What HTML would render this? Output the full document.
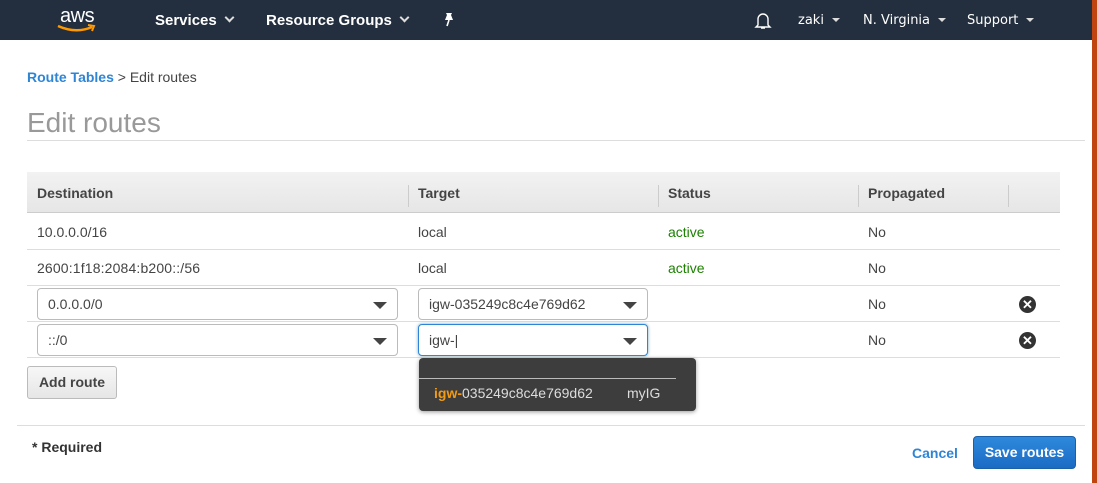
<!DOCTYPE html>
<html><head><style>
*{box-sizing:border-box;margin:0;padding:0}
body{width:1097px;height:483px;overflow:hidden;background:#fff;font-family:"Liberation Sans",Arial,sans-serif;font-size:14px;color:#444;position:relative}
.hdr{position:absolute;left:0;top:0;width:1092px;height:40px;background:#232f3e;color:#fff}
.hdr span{position:absolute;top:12px;font-weight:bold;font-size:15px}
.hdr .r{font-weight:normal;font-size:13px;top:13px;font-family:"DejaVu Sans",sans-serif}
.chev{display:inline-block;width:7px;height:7px;border-right:2px solid #ddd;border-bottom:2px solid #ddd;transform:rotate(45deg);margin-left:9px;position:relative;top:-4px}
.tri{display:inline-block;border-left:4px solid transparent;border-right:4px solid transparent;border-top:4px solid #ddd;margin-left:8px;position:relative;top:-2px}
.orange{position:absolute;right:0;top:0;width:5px;height:483px;background:#c0440f}
.a{position:absolute}
.th{position:absolute;top:172px;left:27px;width:1033px;height:41px;background:linear-gradient(#f2f2f2,#e6e6e6);border-bottom:1px solid #ccc}
.th div{position:absolute;top:13px;font-weight:bold;color:#444}
.sep{position:absolute;top:9px;width:1px;height:22px;background:#ccc}
.row{position:absolute;left:27px;width:1033px;border-bottom:1px solid #ddd}
.sel{position:absolute;height:32px;border:1px solid #bbb;border-radius:4px;background:#fff;padding:7px 10px;color:#444}
.sel:after{content:"";position:absolute;right:10px;top:13px;border-left:7px solid transparent;border-right:7px solid transparent;border-top:7px solid #444}
.x{position:absolute;width:17px;height:17px;border-radius:50%;background:#333;color:#fff;font-size:13px;font-weight:bold;text-align:center;line-height:17px}
.g{color:#1d8102}
</style></head><body>
<div class="hdr">
<span style="left:60px;top:5px;font-weight:normal;font-size:20px;letter-spacing:-0.5px">aws</span>
<svg class="a" style="left:56px;top:24px" width="42" height="10"><path d="M2 2 Q20 10 36 3" stroke="#f90" stroke-width="2.5" fill="none"/><path d="M32 1 L38 2 L36 7" stroke="#f90" stroke-width="2" fill="none"/></svg>
<span style="left:155px">Services<i class="chev"></i></span>
<span style="left:266px">Resource Groups<i class="chev"></i></span>
<svg class="a" style="left:442px;top:12px" width="14" height="16"><path d="M4 1 L10 1 L9 3 L11 8 L3 8 L5 3 Z" fill="#fff"/><path d="M7 8 L5 14" stroke="#fff" stroke-width="1.6"/></svg>
<svg class="a" style="left:754px;top:11px" width="18" height="19"><path d="M4 14 V8 a5 5 0 0 1 10 0 V14 L16 16 H2 Z M7 17 h4" stroke="#fff" stroke-width="1.4" fill="none"/></svg>
<span class="r" style="left:798px">zaki<i class="tri"></i></span>
<span class="r" style="left:863px">N. Virginia<i class="tri"></i></span>
<span class="r" style="left:967px">Support<i class="tri"></i></span>
</div>
<div class="orange"></div>
<div class="a" style="left:27px;top:69px"><b style="color:#2e85d6">Route Tables</b> &gt; Edit routes</div>
<div class="a" style="left:27px;top:107px;font-size:28px;color:#999">Edit routes</div>
<div class="a" style="left:27px;top:140px;width:1058px;height:1px;background:#ddd"></div>
<div class="th">
<div style="left:10px">Destination</div><div class="sep" style="left:381px"></div>
<div style="left:391px">Target</div><div class="sep" style="left:631px"></div>
<div style="left:641px">Status</div><div class="sep" style="left:831px"></div>
<div style="left:841px">Propagated</div><div class="sep" style="left:981px"></div>
</div>
<div class="row" style="top:213px;height:37px"></div>
<div class="row" style="top:250px;height:36px"></div>
<div class="row" style="top:286px;height:36px"></div>
<div class="row" style="top:322px;height:36px"></div>
<div class="a" style="left:37px;top:224px">10.0.0.0/16</div>
<div class="a" style="left:418px;top:224px">local</div>
<div class="a g" style="left:668px;top:224px">active</div>
<div class="a" style="left:868px;top:224px">No</div>
<div class="a" style="left:37px;top:260px;letter-spacing:0.15px">2600:1f18:2084:b200::/56</div>
<div class="a" style="left:418px;top:260px">local</div>
<div class="a g" style="left:668px;top:260px">active</div>
<div class="a" style="left:868px;top:260px">No</div>
<div class="sel" style="left:37px;top:288px;width:361px">0.0.0.0/0</div>
<div class="sel" style="left:418px;top:288px;width:230px">igw-035249c8c4e769d62</div>
<div class="a" style="left:868px;top:296px">No</div>
<div class="x" style="left:1019px;top:296px">&#10005;</div>
<div class="sel" style="left:37px;top:324px;width:361px">::/0</div>
<div class="sel" style="left:418px;top:324px;width:230px;border-color:#2e85d6;box-shadow:0 0 3px #7ab">igw-|</div>
<div class="a" style="left:868px;top:332px">No</div>
<div class="x" style="left:1019px;top:332px">&#10005;</div>
<div class="a" style="left:419px;top:358px;width:277px;height:53px;background:#3d3d3d;border-radius:4px;box-shadow:0 1px 4px #999">
<div class="a" style="left:0;top:20px;width:257px;height:1px;background:#bbb"></div>
<div class="a" style="left:15px;top:27px;color:#ddd"><b style="color:#f39c12">igw-</b>035249c8c4e769d62</div>
<div class="a" style="left:208px;top:27px;color:#ddd">myIG</div>
</div>
<div class="a" style="left:27px;top:366px;width:90px;height:33px;border:1px solid #bbb;border-radius:3px;background:linear-gradient(#f7f7f7,#e6e6e6);font-weight:bold;text-align:center;line-height:31px">Add route</div>
<div class="a" style="left:17px;top:425px;width:1068px;height:1px;background:#ddd"></div>
<div class="a" style="left:32px;top:439px;font-weight:bold;color:#333">* Required</div>
<div class="a" style="left:912px;top:445px;font-weight:bold;color:#2e85d6">Cancel</div>
<div class="a" style="left:973px;top:436px;width:103px;height:33px;border:1px solid #1a5fa8;border-radius:4px;background:linear-gradient(#2f89dc,#1a6bc4);color:#fff;font-weight:bold;text-align:center;line-height:31px">Save routes</div>
</body></html>
